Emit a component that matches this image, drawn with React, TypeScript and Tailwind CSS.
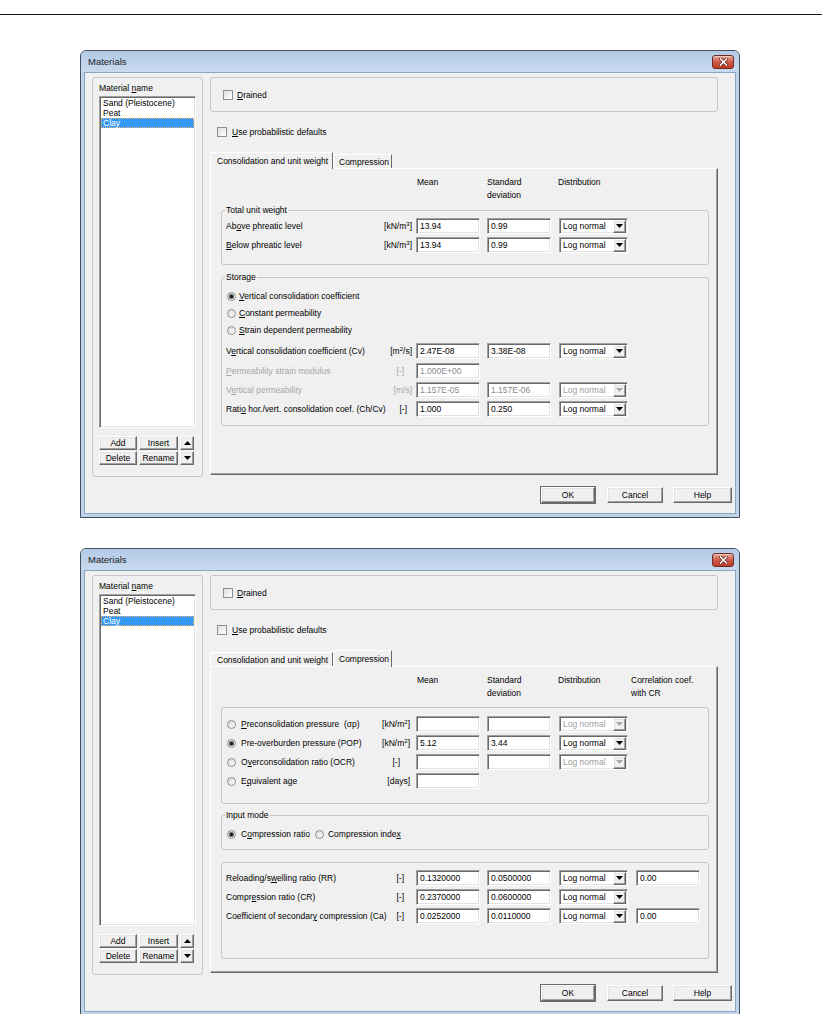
import React from "react";

const SUNKEN =
  "border border-t-[#a0a0a0] border-l-[#a0a0a0] border-b-white border-r-white shadow-[inset_1px_1px_0_#696969,inset_-1px_-1px_0_#e3e3e3]";
const RAISED =
  "border border-t-white border-l-white border-b-[#696969] border-r-[#696969] shadow-[inset_-1px_-1px_0_#a0a0a0,inset_1px_1px_0_#e3e3e3]";
const GROUP = "border border-[#c5c5c5] rounded-[3px]";

function Check() {
  return (
    <div className="w-[10px] h-[10px] shrink-0 border border-[#8e8f8f] bg-gradient-to-br from-[#dedede] to-white" />
  );
}

function Radio({ on = false }: { on?: boolean }) {
  return (
    <div className="w-[9px] h-[9px] shrink-0 rounded-full border border-[#8e8f8f] bg-gradient-to-br from-[#d6d6d6] to-white flex items-center justify-center">
      {on && <div className="w-[3px] h-[3px] rounded-full bg-[#1c1c1c] shadow-[0_0_0_1px_#5c5c5c]" />}
    </div>
  );
}

function Tri({ up = false, color = "#000" }: { up?: boolean; color?: string }) {
  return (
    <svg width="7" height="4" viewBox="0 0 7 4">
      <polygon points={up ? "0,4 7,4 3.5,0" : "0,0 7,0 3.5,4"} fill={color} />
    </svg>
  );
}

function Btn({ children, cls }: { children?: React.ReactNode; cls: string }) {
  return (
    <div className={`${RAISED} ${cls} bg-[#f0f0f0] flex items-center justify-center shrink-0`}>{children}</div>
  );
}

function Field({ v = "", off = false, w = "w-[64px]" }: { v?: string; off?: boolean; w?: string }) {
  return (
    <div
      className={`${SUNKEN} ${w} h-[16px] bg-white flex items-center pl-[3px] whitespace-nowrap ${
        off ? "text-[#8a8a8a]" : ""
      }`}
    >
      {v}
    </div>
  );
}

function Drop({ off = false }: { off?: boolean }) {
  return (
    <div className={`${SUNKEN} w-[69px] h-[16px] bg-white flex items-center justify-between pl-[3px] pr-[1px]`}>
      <span className={off ? "text-[#9c9c9c]" : ""}>Log normal</span>
      <div className={`${RAISED} w-[13px] h-[13px] bg-[#f0f0f0] flex items-center justify-center`}>
        <Tri color={off ? "#a8a8a8" : "#000"} />
      </div>
    </div>
  );
}

type Cell = { v?: string; off?: boolean } | undefined;

function Row({
  lead,
  label,
  unit,
  umr = "mr-0",
  mean,
  std,
  dist,
  corr,
  dim = false,
  cls = "",
}: {
  lead?: React.ReactNode;
  label: React.ReactNode;
  unit: React.ReactNode;
  umr?: string;
  mean?: Cell;
  std?: Cell;
  dist?: "on" | "off";
  corr?: string;
  dim?: boolean;
  cls?: string;
}) {
  return (
    <div className={`flex items-center h-[16px] ${cls}`}>
      <div className={`w-[186px] shrink-0 flex items-center whitespace-nowrap ${dim ? "text-[#a6a6a6]" : ""}`}>
        {lead}
        <span className="flex-1">{label}</span>
        <span className={umr}>{unit}</span>
      </div>
      <div className="w-[64px] ml-[4px] shrink-0">{mean && <Field v={mean.v} off={mean.off} />}</div>
      <div className="w-[64px] ml-[7px] shrink-0">{std && <Field v={std.v} off={std.off} />}</div>
      <div className="w-[69px] ml-[8px] shrink-0">{dist && <Drop off={dist === "off"} />}</div>
      <div className="w-[64px] ml-[8px] shrink-0">{corr !== undefined && <Field v={corr} />}</div>
    </div>
  );
}

function Header({ corr = false }: { corr?: boolean }) {
  return (
    <div className="flex h-[26px] leading-[13px]">
      <div className="w-[196px] shrink-0" />
      <div className="w-[70px] shrink-0">Mean</div>
      <div className="w-[71px] shrink-0">
        Standard
        <br />
        deviation
      </div>
      <div className="w-[73px] shrink-0">Distribution</div>
      {corr && (
        <div>
          Correlation coef.
          <br />
          with CR
        </div>
      )}
    </div>
  );
}

function ConsolidationTab() {
  return (
    <>
      <Header />
      <fieldset className={`${GROUP} w-[488px] h-[60px] mt-[3px] pl-[4px] pt-[3px]`}>
        <legend className="px-[1px] -ml-[1px] leading-[10px]">Total unit weight</legend>
        <div className="flex flex-col gap-[3px]">
          <Row
            label={
              <>
                Ab<u>o</u>ve phreatic level
              </>
            }
            unit={
              <>
                [kN/m<sup className="text-[6px]">3</sup>]
              </>
            }
            mean={{ v: "13.94" }}
            std={{ v: "0.99" }}
            dist="on"
          />
          <Row
            label={
              <>
                <u>B</u>elow phreatic level
              </>
            }
            unit={
              <>
                [kN/m<sup className="text-[6px]">3</sup>]
              </>
            }
            mean={{ v: "13.94" }}
            std={{ v: "0.99" }}
            dist="on"
          />
        </div>
      </fieldset>
      <fieldset className={`${GROUP} w-[488px] h-[154px] mt-[7px] pl-[4px] pt-[7px]`}>
        <legend className="px-[1px] -ml-[1px] leading-[10px]">Storage</legend>
        <div className="flex flex-col gap-[3px]">
          <div className="h-[14px] flex items-center pl-[1px]">
            <Radio on />
            <span className="ml-[3px]">
              <u>V</u>ertical consolidation coefficient
            </span>
          </div>
          <div className="h-[14px] flex items-center pl-[1px]">
            <Radio />
            <span className="ml-[3px]">
              <u>C</u>onstant permeability
            </span>
          </div>
          <div className="h-[14px] flex items-center pl-[1px]">
            <Radio />
            <span className="ml-[3px]">
              <u>S</u>train dependent permeability
            </span>
          </div>
        </div>
        <div className="flex flex-col mt-[6px]">
          <Row
            label={
              <>
                V<u>e</u>rtical consolidation coefficient (Cv)
              </>
            }
            unit={
              <>
                [m<sup className="text-[6px]">2</sup>/s]
              </>
            }
            mean={{ v: "2.47E-08" }}
            std={{ v: "3.38E-08" }}
            dist="on"
          />
          <Row
            cls="mt-[4px]"
            dim
            label={
              <>
                <u>P</u>ermeability strain modulus
              </>
            }
            unit="[-]"
            umr="mr-[8px]"
            mean={{ v: "1.000E+00", off: true }}
          />
          <Row
            cls="mt-[3px]"
            dim
            label={
              <>
                V<u>e</u>rtical permeability
              </>
            }
            unit="[m/s]"
            mean={{ v: "1.157E-05", off: true }}
            std={{ v: "1.157E-06", off: true }}
            dist="off"
          />
          <Row
            cls="mt-[3px]"
            label={
              <>
                Rati<u>o</u> hor./vert. consolidation coef. (Ch/Cv)
              </>
            }
            unit="[-]"
            umr="mr-[5px]"
            mean={{ v: "1.000" }}
            std={{ v: "0.250" }}
            dist="on"
          />
        </div>
      </fieldset>
    </>
  );
}

function CompressionTab() {
  const lead = (on: boolean) => (
    <span className="flex items-center pl-[1px] mr-[5px]">
      <Radio on={on} />
    </span>
  );
  const kn = (
    <>
      [kN/m<sup className="text-[6px]">2</sup>]
    </>
  );
  return (
    <>
      <Header corr />
      <div className={`${GROUP} w-[488px] h-[97px] mt-[7px] pl-[4px] pt-[8px] flex flex-col gap-[3px]`}>
        <Row
          lead={lead(false)}
          label={
            <>
              <u>P</u>reconsolidation pressure&nbsp;&nbsp;(σp)
            </>
          }
          unit={kn}
          umr="mr-[2px]"
          mean={{ v: "" }}
          std={{ v: "" }}
          dist="off"
        />
        <Row
          lead={lead(true)}
          label="Pre-overburden pressure (POP)"
          unit={kn}
          umr="mr-[2px]"
          mean={{ v: "5.12" }}
          std={{ v: "3.44" }}
          dist="on"
        />
        <Row
          lead={lead(false)}
          label={
            <>
              O<u>v</u>erconsolidation ratio (OCR)
            </>
          }
          unit="[-]"
          umr="mr-[12px]"
          mean={{ v: "" }}
          std={{ v: "" }}
          dist="off"
        />
        <Row
          lead={lead(false)}
          label={
            <>
              E<u>q</u>uivalent age
            </>
          }
          unit="[days]"
          umr="mr-[2px]"
          mean={{ v: "" }}
        />
      </div>
      <fieldset className={`${GROUP} w-[488px] h-[40px] mt-[6px] pl-[4px] pt-[8px]`}>
        <legend className="px-[1px] -ml-[1px] leading-[10px]">Input mode</legend>
        <div className="h-[12px] flex items-center pl-[1px]">
          <Radio on />
          <span className="ml-[5px]">
            C<u>o</u>mpression ratio
          </span>
          <span className="ml-[5px] flex items-center">
            <Radio />
          </span>
          <span className="ml-[4px]">
            Compression inde<u>x</u>
          </span>
        </div>
      </fieldset>
      <div className={`${GROUP} w-[488px] h-[97px] mt-[12px] pl-[4px] pt-[7px] flex flex-col gap-[3px]`}>
        <Row
          label={
            <>
              Reloading/s<u>w</u>elling ratio (RR)
            </>
          }
          unit="[-]"
          umr="mr-[8px]"
          mean={{ v: "0.1320000" }}
          std={{ v: "0.0500000" }}
          dist="on"
          corr="0.00"
        />
        <Row
          label={
            <>
              Compr<u>e</u>ssion ratio (CR)
            </>
          }
          unit="[-]"
          umr="mr-[8px]"
          mean={{ v: "0.2370000" }}
          std={{ v: "0.0600000" }}
          dist="on"
        />
        <Row
          label={
            <>
              Coefficient of secondar<u>y</u> compression (Ca)
            </>
          }
          unit="[-]"
          umr="mr-[8px]"
          mean={{ v: "0.0252000" }}
          std={{ v: "0.0110000" }}
          dist="on"
          corr="0.00"
        />
      </div>
    </>
  );
}

function Tabs({ active }: { active: 0 | 1 }) {
  const base =
    "flex items-center border-t border-l border-r border-t-white border-l-white border-r-[#696969] bg-[#f0f0f0] whitespace-nowrap";
  return (
    <div className="flex items-end h-[16px]">
      <div className={`${base} w-[123px] pl-[6px] ${active === 0 ? "h-[17px] -mb-px relative z-10" : "h-[14px]"}`}>
        Consolidation and unit weight
      </div>
      <div className={`${base} w-[59px] pl-[5px] ${active === 1 ? "h-[17px] -mb-px relative z-10" : "h-[14px]"}`}>
        Compression
      </div>
    </div>
  );
}

function CloseBtn() {
  return (
    <div className="w-[22px] h-[14px] rounded-[3px] border border-[#6b2a22] bg-gradient-to-b from-[#e6a597] via-[#cf5c4a] to-[#c03a26] flex items-center justify-center shadow-[inset_0_1px_0_#f2c8bf]">
      <svg width="9" height="8" viewBox="0 0 9 8">
        <path d="M1.5 1 L7.5 7 M7.5 1 L1.5 7" stroke="#5a1a12" strokeWidth="3" strokeLinecap="square" />
        <path d="M1.5 1 L7.5 7 M7.5 1 L1.5 7" stroke="#ffffff" strokeWidth="1.6" strokeLinecap="square" />
      </svg>
    </div>
  );
}

function LeftPanel() {
  return (
    <div className={`${GROUP} w-[111px] h-[400px] shrink-0 pt-[5px] pl-[6px] flex flex-col`}>
      <div className="h-[10px] leading-[10px] whitespace-nowrap">
        Material <u>n</u>ame
      </div>
      <div className={`${SUNKEN} bg-white w-[97px] h-[332px] mt-[3px] p-[1px] flex flex-col`}>
        <div className="h-[10px] leading-[10px] pl-[2px]">Sand (Pleistocene)</div>
        <div className="h-[10px] leading-[10px] pl-[2px]">Peat</div>
        <div className="h-[10px] leading-[9px] pl-[1px] bg-[#3399ff] text-white border border-dotted border-[#f0b070]">
          Clay
        </div>
      </div>
      <div className="mt-[8px] flex flex-col gap-[1px]">
        <div className="flex">
          <Btn cls="w-[38px] h-[14px]">Add</Btn>
          <Btn cls="w-[39px] h-[14px] ml-[2px]">Insert</Btn>
          <Btn cls="w-[14px] h-[14px] ml-[2px]">
            <Tri up />
          </Btn>
        </div>
        <div className="flex">
          <Btn cls="w-[38px] h-[14px]">Delete</Btn>
          <Btn cls="w-[39px] h-[14px] ml-[2px]">Rename</Btn>
          <Btn cls="w-[14px] h-[14px] ml-[2px]">
            <Tri />
          </Btn>
        </div>
      </div>
    </div>
  );
}

function Window({ tab }: { tab: 0 | 1 }) {
  return (
    <div className="w-[660px] h-[468px] shrink-0 flex flex-col border border-[#464f5c] rounded-t-[6px] bg-[#bfd3eb]">
      <div className="h-[21px] shrink-0 flex items-center justify-between pl-[7px] pr-[5px] rounded-t-[5px] bg-gradient-to-b from-[#b3cae6] to-[#c8daef]">
        <span className="text-[9.5px] text-[#1b1b1b]">Materials</span>
        <CloseBtn />
      </div>
      <div className="flex-1 mx-[3px] mb-[3px] border border-[#8ea5c1] bg-[#f0f0f0] flex flex-col">
        <div className="flex pt-[4px] pl-[7px] gap-[7px]">
          <LeftPanel />
          <div className="w-[508px] shrink-0 flex flex-col">
            <div className={`${GROUP} h-[35px] flex items-center pl-[12px] gap-[4px]`}>
              <Check />
              <span>
                <u>D</u>rained
              </span>
            </div>
            <div className="mt-[14px] h-[11px] flex items-center pl-[7px] gap-[5px]">
              <Check />
              <span>
                <u>U</u>se probabilistic defaults
              </span>
            </div>
            <div className="mt-[15px]">
              <Tabs active={tab} />
            </div>
            <div className="h-[307px] border border-t-white border-l-white border-r-[#696969] border-b-[#696969] shadow-[inset_-1px_-1px_0_#a0a0a0] pt-[7px] pl-[10px] flex flex-col">
              {tab === 0 ? <ConsolidationTab /> : <CompressionTab />}
            </div>
          </div>
        </div>
        <div className="flex justify-end pr-[3px] mt-[10px]">
          <Btn cls="w-[54px] h-[16px] outline outline-1 outline-[#6a6a6a]">OK</Btn>
          <Btn cls="w-[56px] h-[16px] ml-[12px]">Cancel</Btn>
          <Btn cls="w-[59px] h-[16px] ml-[10px]">Help</Btn>
        </div>
      </div>
    </div>
  );
}

export default function App() {
  return (
    <div className="w-[822px] h-[1014px] overflow-hidden bg-white text-black text-[8.5px] leading-[10px] font-['Liberation_Sans',Arial,sans-serif]">
      <div className="h-[14px]" />
      <div className="h-px bg-[#1a1a1a]" />
      <div className="pt-[35px] pl-[80px] flex flex-col gap-[30px]">
        <Window tab={0} />
        <Window tab={1} />
      </div>
    </div>
  );
}
